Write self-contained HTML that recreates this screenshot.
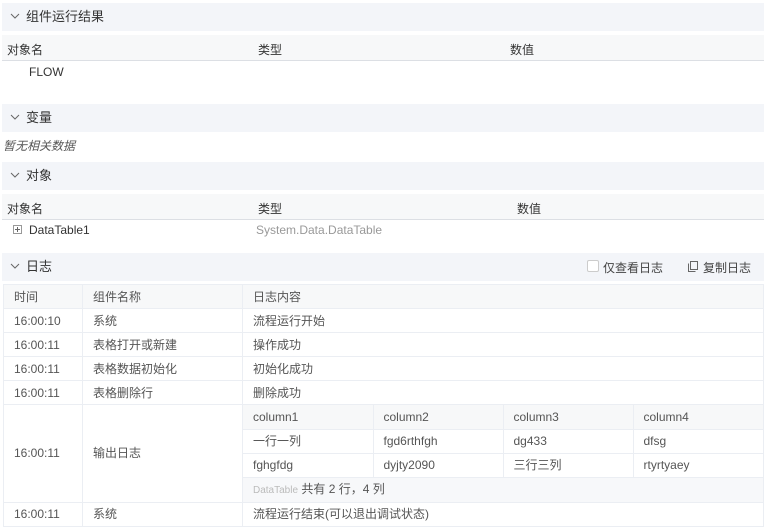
<!DOCTYPE html>
<html><head><meta charset="utf-8"><style>
*{margin:0;padding:0;box-sizing:border-box}
body{width:767px;height:530px;background:#fff;font-family:"Liberation Sans","Noto Sans CJK SC",sans-serif;font-size:12px;color:#333;position:relative;overflow:hidden}
.a{position:absolute;white-space:nowrap}
.hd{position:absolute;left:2px;width:762px;height:28px;background:#f3f5f9;font-size:13px;line-height:28px;padding-left:24px;color:#333}
.hd svg{position:absolute;left:8px;top:10px}
.th{position:absolute;left:2px;width:762px;height:26px;background:#f7f8f9;border-bottom:1px solid #dcdfe4}
table{position:absolute;left:3px;top:284px;border-collapse:collapse;width:761px;color:#555}
td{border:1px solid #ebeef3;height:24px;padding:0 0 0 10px;line-height:22px}
td.h{background:#f7f8f9}
.in{position:static;width:100%;border:none}
.in td{border-top:none;border-left:none}
.in td:last-child{border-right:none}
</style></head><body>
<div class="hd" style="top:3px"><svg width="10" height="7" viewBox="0 0 10 7"><path d="M1 1l4 4 4-4" stroke="#666" fill="none"/></svg>组件运行结果</div>
<div class="th" style="top:35px"></div>
<div class="a" style="left:7px;top:41px">对象名</div><div class="a" style="left:258px;top:41px">类型</div><div class="a" style="left:510px;top:41px">数值</div>
<div class="a" style="left:29px;top:65px">FLOW</div>
<div class="hd" style="top:104px"><svg width="10" height="7" viewBox="0 0 10 7"><path d="M1 1l4 4 4-4" stroke="#666" fill="none"/></svg>变量</div>
<div class="a" style="left:3px;top:137px;font-style:italic;color:#555">暂无相关数据</div>
<div class="hd" style="top:162px"><svg width="10" height="7" viewBox="0 0 10 7"><path d="M1 1l4 4 4-4" stroke="#666" fill="none"/></svg>对象</div>
<div class="th" style="top:194px"></div>
<div class="a" style="left:7px;top:200px">对象名</div><div class="a" style="left:258px;top:200px">类型</div><div class="a" style="left:517px;top:200px">数值</div>
<svg class="a" style="left:13px;top:225px" width="9" height="9"><rect x=".5" y=".5" width="8" height="8" fill="none" stroke="#999"/><path d="M2 4.5h5M4.5 2v5" stroke="#666"/></svg>
<div class="a" style="left:29px;top:223px">DataTable1</div>
<div class="a" style="left:256px;top:223px;color:#999">System.Data.DataTable</div>
<div class="hd" style="top:253px"><svg width="10" height="7" viewBox="0 0 10 7"><path d="M1 1l4 4 4-4" stroke="#666" fill="none"/></svg>日志</div>
<div class="a" style="left:587px;top:260px;width:12px;height:12px;border:1px solid #ccc;border-radius:2px;background:#fff"></div>
<div class="a" style="left:603px;top:259px;color:#444">仅查看日志</div>
<svg class="a" style="left:688px;top:261px" width="10" height="11"><rect x="2.5" y=".5" width="7" height="8" fill="none" stroke="#666"/><path d="M.5 2.5v8h7" fill="none" stroke="#666"/></svg>
<div class="a" style="left:703px;top:259px;color:#444">复制日志</div>
<table>
<tr><td class="h" style="width:79px">时间</td><td class="h" style="width:160px">组件名称</td><td class="h">日志内容</td></tr>
<tr><td>16:00:10</td><td>系统</td><td>流程运行开始</td></tr>
<tr><td>16:00:11</td><td>表格打开或新建</td><td>操作成功</td></tr>
<tr><td>16:00:11</td><td>表格数据初始化</td><td>初始化成功</td></tr>
<tr><td>16:00:11</td><td>表格删除行</td><td>删除成功</td></tr>
<tr><td>16:00:11</td><td>输出日志</td><td style="padding:0">
<table class="in">
<tr><td class="h" style="width:130px">column1</td><td class="h" style="width:130px">column2</td><td class="h" style="width:130px">column3</td><td class="h">column4</td></tr>
<tr><td>一行一列</td><td>fgd6rthfgh</td><td>dg433</td><td>dfsg</td></tr>
<tr><td>fghgfdg</td><td>dyjty2090</td><td>三行三列</td><td>rtyrtyaey</td></tr>
<tr><td colspan="4" style="background:#f7f8fa;border-bottom:none"><span style="color:#bbb;font-size:10px">DataTable</span> 共有 2 行，4 列</td></tr>
</table></td></tr>
<tr><td>16:00:11</td><td>系统</td><td>流程运行结束(可以退出调试状态)</td></tr>
</table>
</body></html>
